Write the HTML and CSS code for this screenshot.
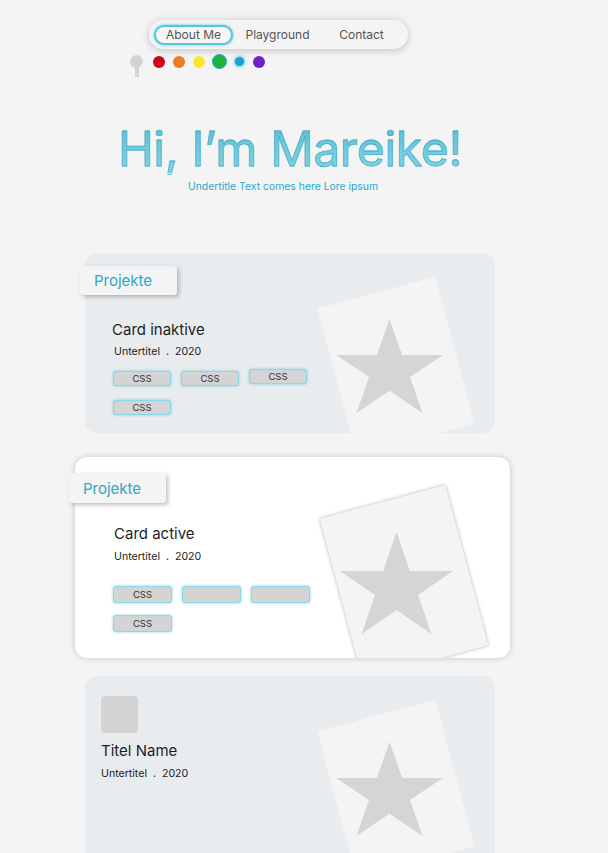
FILE: index.html
```html
<!DOCTYPE html>
<html lang="de">
<head>
<meta charset="utf-8">
<title>Mareike</title>
<link rel="stylesheet" href="styles.css">
</head>
<body>
<div class="page">
  <header class="top">
    <nav class="nav">
      <a class="nav-item active">About Me</a>
      <a class="nav-item">Playground</a>
      <a class="nav-item">Contact</a>
    </nav>
    <div class="swatches">
      <span class="pin"><span class="pin-head"></span><span class="pin-stem"></span></span>
      <span class="slot"><span class="dot red"></span></span>
      <span class="slot"><span class="dot orange"></span></span>
      <span class="slot"><span class="dot yellow"></span></span>
      <span class="slot"><span class="dot green"></span></span>
      <span class="slot"><span class="dot cyan"></span></span>
      <span class="slot"><span class="dot purple"></span></span>
    </div>
  </header>

  <section class="hero">
    <h1 class="hero-title">Hi, I’m Mareike!</h1>
    <p class="hero-sub">Undertitle Text comes here Lore ipsum</p>
  </section>

  <main class="cards">
    <article class="card card-inactive">
      <div class="visual-clip">
        <div class="photo"></div>
        <svg class="star" viewBox="-0.951 -1 1.902 1.809" preserveAspectRatio="none"><polygon points="0,-1 0.2245,-0.309 0.951,-0.309 0.363,0.118 0.588,0.809 0,0.382 -0.588,0.809 -0.363,0.118 -0.951,-0.309 -0.2245,-0.309"/></svg>
      </div>
      <div class="tab">Projekte</div>
      <div class="card-body">
        <h2 class="card-title">Card inaktive</h2>
        <p class="meta">Untertitel&nbsp; .&nbsp; 2020</p>
        <div class="chips">
          <span class="chip">CSS</span>
          <span class="chip">CSS</span>
          <span class="chip chip-raised">CSS</span>
          <span class="chip">CSS</span>
        </div>
      </div>
    </article>

    <article class="card card-active">
      <div class="visual-clip">
        <div class="photo"></div>
        <svg class="star" viewBox="-0.951 -1 1.902 1.809" preserveAspectRatio="none"><polygon points="0,-1 0.2245,-0.309 0.951,-0.309 0.363,0.118 0.588,0.809 0,0.382 -0.588,0.809 -0.363,0.118 -0.951,-0.309 -0.2245,-0.309"/></svg>
      </div>
      <div class="tab">Projekte</div>
      <div class="card-body">
        <h2 class="card-title">Card active</h2>
        <p class="meta">Untertitel&nbsp; .&nbsp; 2020</p>
        <div class="chips">
          <span class="chip">CSS</span>
          <span class="chip"></span>
          <span class="chip"></span>
          <span class="chip">CSS</span>
        </div>
      </div>
    </article>

    <article class="card card-person">
      <div class="visual-clip">
        <div class="photo"></div>
        <svg class="star" viewBox="-0.951 -1 1.902 1.809" preserveAspectRatio="none"><polygon points="0,-1 0.2245,-0.309 0.951,-0.309 0.363,0.118 0.588,0.809 0,0.382 -0.588,0.809 -0.363,0.118 -0.951,-0.309 -0.2245,-0.309"/></svg>
      </div>
      <div class="card-body">
        <div class="avatar"></div>
        <h2 class="card-title">Titel Name</h2>
        <p class="meta">Untertitel&nbsp; .&nbsp; 2020</p>
      </div>
    </article>
  </main>
</div>
</body>
</html>
```

FILE: styles.css
```css
* { box-sizing: border-box; }

html, body {
  margin: 0;
  background: #f4f4f4;
}

body {
  font-family: Inter, "Noto Sans", sans-serif;
  color: #222;
}

.page {
  width: 608px;
  padding-top: 20px;
}

/* ---------- navigation ---------- */
.nav {
  display: flex;
  align-items: center;
  gap: 5px;
  width: 259px;
  height: 29px;
  margin-left: 149px;
  padding: 0 4px 0 5px;
  border-radius: 15px;
  background: #f4f4f4;
  box-shadow: 0 0 10px rgba(0, 0, 0, 0.14), 0 3px 6px rgba(0, 0, 0, 0.08);
}

.nav-item {
  display: flex;
  align-items: center;
  justify-content: center;
  width: 79px;
  height: 20px;
  border-radius: 10px;
  font-size: 12px;
  color: #555;
  text-decoration: none;
}

.nav-item.active {
  border: 2px solid #55c6de;
  background: #f7f7f7;
  box-shadow: 0 0 3px rgba(60, 185, 215, 0.8);
}

/* ---------- colour swatches ---------- */
.swatches {
  display: flex;
  align-items: flex-start;
  margin-left: 130px;
  margin-top: 6px;
  height: 22px;
}

.pin {
  display: flex;
  flex-direction: column;
  align-items: center;
  width: 13px;
  margin-right: 6px;
}

.pin-head {
  width: 13px;
  height: 13px;
  border-radius: 50%;
  background: #d3d3d3;
}

.pin-stem {
  width: 4px;
  height: 10px;
  margin-top: -1px;
  background: #d3d3d3;
}

.slot {
  display: flex;
  align-items: center;
  justify-content: center;
  width: 20px;
  height: 13px;
}

.dot {
  display: block;
  width: 12px;
  height: 12px;
  border-radius: 50%;
}

.red { background: #d0021b; }
.orange { background: #f17a25; }
.yellow { background: #fde234; }
.green {
  width: 15px;
  height: 15px;
  background: #1fb23b;
  border: 1.5px solid #2a9fd6;
}
.cyan {
  width: 9px;
  height: 9px;
  background: #12a6d2;
  box-shadow: 0 0 3px 1px rgba(30, 170, 215, 0.6);
}
.purple { background: #6f1fcb; }

/* ---------- hero ---------- */
.hero {
  width: 410px;
  margin-left: 85px;
  margin-top: 48px;
}

.hero-title {
  margin: 0;
  font-size: 48px;
  font-weight: 400;
  line-height: 48px;
  text-align: center;
  letter-spacing: -0.3px;
  color: #66c3d9;
  background: linear-gradient(180deg, #5dbcd3 0%, #6fc9dd 45%, #82d5e6 100%);
  -webkit-background-clip: text;
  background-clip: text;
  -webkit-text-fill-color: transparent;
  -webkit-text-stroke: 0.8px rgba(72, 168, 194, 0.85);
}

.hero-sub {
  margin: 7px 0 0;
  padding-right: 14px;
  font-size: 10.4px;
  line-height: 14px;
  text-align: center;
  color: #2aa8cc;
}

/* ---------- cards ---------- */
.cards {
  width: 410px;
  margin-left: 85px;
  margin-top: 59px;
  display: flex;
  flex-direction: column;
}

.card {
  position: relative;
  border-radius: 12px;
}

.visual-clip {
  position: absolute;
  inset: 0;
  overflow: hidden;
  border-radius: 12px;
}

.photo {
  position: absolute;
  left: 250px;
  top: 37px;
  width: 122px;
  height: 152px;
  background: #f4f4f4;
  transform: rotate(-15deg);
}

.star {
  position: absolute;
  left: 251px;
  top: 66px;
  width: 107px;
  height: 94px;
  fill: #d5d5d5;
}

.tab {
  position: relative;
  display: flex;
  align-items: center;
  width: 97px;
  height: 29px;
  margin-left: -5px;
  padding-left: 14px;
  border-radius: 3px;
  background: #f4f4f4;
  box-shadow: 2px 2px 4px rgba(0, 0, 0, 0.25);
  font-size: 15px;
  color: #2aa8cb;
}

.card-body {
  position: relative;
}

.card-title {
  margin: 0;
  font-size: 15px;
  font-weight: 400;
  line-height: 18px;
  color: #1e1e1e;
}

.meta {
  margin: 0;
  font-size: 10.6px;
  line-height: 14px;
  color: #222;
}

.chips {
  display: flex;
  flex-wrap: wrap;
  align-items: flex-start;
  width: 200px;
}

.chip {
  display: flex;
  align-items: center;
  justify-content: center;
  width: 58px;
  height: 15px;
  border: 1px solid #8ad8ea;
  border-radius: 3px;
  background: #d4d4d4;
  box-shadow: 0 0 3px rgba(70, 195, 225, 0.7);
  font-size: 9.5px;
  color: #333;
}

/* inactive card */
.card-inactive {
  height: 180px;
  padding-top: 13px;
  background: #e9ecef;
}

.card-inactive .card-body {
  padding-left: 27px;
}

.card-inactive .card-title {
  margin-top: 26px;
}

.card-inactive .meta {
  margin-top: 6px;
  padding-left: 2px;
}

.card-inactive .chips {
  margin-top: 12px;
  padding-left: 1px;
  column-gap: 10px;
  row-gap: 14px;
}

.card-inactive .chip-raised {
  margin-top: -2px;
  margin-bottom: 2px;
}

/* active card */
.card-active {
  width: 435px;
  height: 201px;
  margin-top: 24px;
  margin-left: -10px;
  padding-top: 16px;
  background: #ffffff;
  box-shadow: 0 0 6px rgba(0, 0, 0, 0.2);
}

.card-active .tab {
  height: 30px;
  margin-left: -6px;
}

.card-active .photo {
  left: 264px;
  top: 42px;
  width: 130px;
  height: 166px;
  box-shadow: 0 0 4px rgba(0, 0, 0, 0.3);
}

.card-active .star {
  left: 265px;
  top: 75px;
  width: 113px;
  height: 102px;
}

.card-active .card-body {
  padding-left: 39px;
}

.card-active .card-title {
  margin-top: 22px;
}

.card-active .meta {
  margin-top: 7px;
}

.card-active .chips {
  margin-top: 22px;
  margin-left: -1px;
  column-gap: 10px;
  row-gap: 12px;
}

.card-active .chip {
  height: 17px;
  width: 59px;
}

/* person card */
.card-person {
  height: 200px;
  margin-top: 18px;
  padding-top: 20px;
  background: #e9ecef;
}

.card-person .card-body {
  padding-left: 16px;
}

.avatar {
  width: 37px;
  height: 37px;
  border-radius: 4px;
  background: #d4d4d4;
}

.card-person .card-title {
  margin-top: 9px;
}

.card-person .meta {
  margin-top: 7px;
}
```
